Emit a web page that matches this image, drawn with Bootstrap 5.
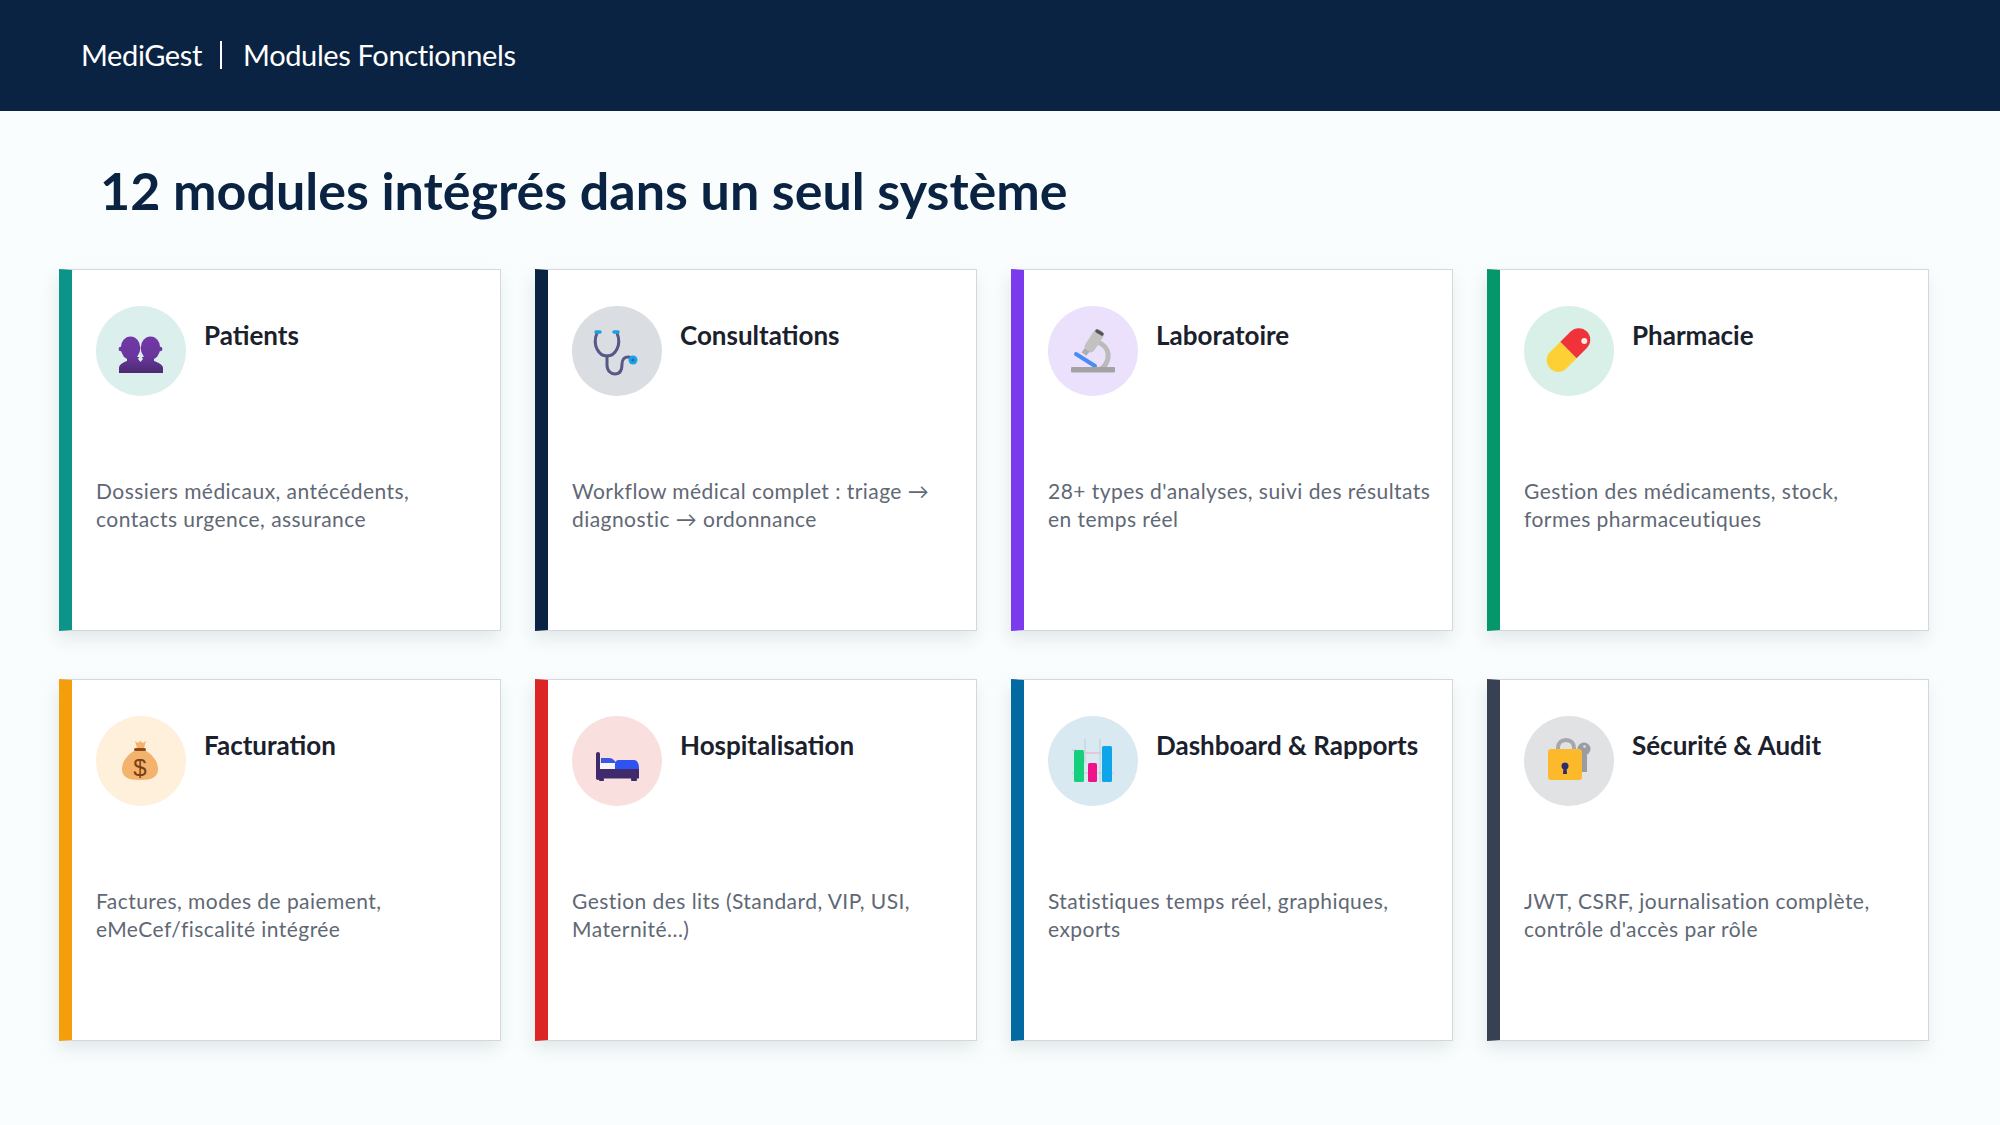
<!DOCTYPE html>
<html lang="fr">
<head>
<meta charset="utf-8">
<title>MediGest | Modules Fonctionnels</title>
<link href="https://cdn.jsdelivr.net/npm/bootstrap@5.3.0/dist/css/bootstrap.min.css" rel="stylesheet">
<style>
body{background:#f9fdfd;font-family:Lato,"Liberation Sans",sans-serif;min-height:1125px}
.app-head{height:111px;background:#0a2342;color:#fff;padding:0 0 2px 81px;font-size:29px;letter-spacing:-.37px}
.app-head .sep{width:2px;height:28px;background:#fff;margin:0 21px 0 18px}
.page-title{margin:0;padding:48px 0 0 100px;height:158px;font-size:52px;font-weight:700;color:#0a2342;line-height:62px}
.modules{padding:0 71px 0 59px}
.modules .row{--bs-gutter-x:34px;--bs-gutter-y:48px}
.module{height:362px;border-radius:0;border:1px solid #d3d8dd;border-left:13px solid var(--accent);box-shadow:-2px 8px 16px rgba(30,50,70,.1)}
.module .card-body{padding:36px 19px 0 24px}
.module-icon{width:90px;height:90px;flex:none;background:var(--tint)}
.module-icon svg{display:block}
.module .card-title{margin:9px 0 0 18px;font-size:26px;line-height:40px;font-weight:700;color:#1a202c;white-space:nowrap}
.module .card-text{margin-top:81px;font-size:21px;line-height:28px;color:#5f6875;letter-spacing:.45px}
.a-teal{--accent:#0d9488;--tint:#dbefed}
.a-navy{--accent:#0a2342;--tint:#dadee3}
.a-purple{--accent:#7c3aed;--tint:#ebe1fc}
.a-green{--accent:#059669;--tint:#d9f0e9}
.a-orange{--accent:#f59e0b;--tint:#fef0da}
.a-red{--accent:#dc2626;--tint:#fadfdf}
.a-blue{--accent:#0369a1;--tint:#d9e9f1}
.a-slate{--accent:#374151;--tint:#e1e2e4}
</style>
</head>
<body>
<header class="app-head d-flex align-items-center">
  <span>MediGest</span><span class="sep"></span><span>Modules Fonctionnels</span>
</header>
<h1 class="page-title">12 modules intégrés dans un seul système</h1>
<main class="modules">
<div class="row row-cols-4">

<div class="col"><div class="card module a-teal"><div class="card-body">
  <div class="d-flex">
    <div class="module-icon rounded-circle"><svg width="90" height="90" viewBox="0 0 90 90"><defs><linearGradient id="g1" gradientUnits="userSpaceOnUse" x1="0" y1="30" x2="0" y2="67"><stop offset="0" stop-color="#7238a8"/><stop offset=".55" stop-color="#6a369c"/><stop offset="1" stop-color="#4c2a72"/></linearGradient></defs><g fill="url(#g1)"><ellipse cx="34.500" cy="42" rx="9.800" ry="11.500"/><ellipse cx="54.500" cy="42" rx="9.800" ry="11.500"/><circle cx="24.800" cy="43" r="2.200"/><circle cx="64.200" cy="43" r="2.200"/><path d="M23 67v-5c0-3.500 4-5.500 8-7v-4h27v4c4 1.500 9 3.500 9 7v5z"/></g><path fill="#dbefed" d="M44.500 49l-2.500 4 2.500 3 2.500-3z"/></svg></div>
    <h5 class="card-title">Patients</h5>
  </div>
  <p class="card-text">Dossiers médicaux, antécédents, contacts urgence, assurance</p>
</div></div></div>

<div class="col"><div class="card module a-navy"><div class="card-body">
  <div class="d-flex">
    <div class="module-icon rounded-circle"><svg width="90" height="90" viewBox="0 0 90 90" fill="none"><g transform="translate(-1 0)"><path stroke="#575886" stroke-width="3" stroke-linecap="round" d="M26 27c-2 5-3 10 0 16 2 4 6 7 10 7s8-3 10-7c3-6 2-11 0-16"/><path stroke="#575886" stroke-width="3" stroke-linecap="round" d="M36 50v9c0 6 4 9 8 9 6 0 7-5 7-10 0-5 3-7 6-7 3 0 4 1 5 3"/><path stroke="#1d9ee2" stroke-width="3.500" stroke-linecap="round" d="M25 26h4M43 26h4"/><circle cx="62" cy="54" r="4.500" fill="#1da1e6"/><circle cx="62" cy="54" r="1.500" fill="#2f5fb5"/></g></svg></div>
    <h5 class="card-title">Consultations</h5>
  </div>
  <p class="card-text">Workflow médical complet : triage → diagnostic → ordonnance</p>
</div></div></div>

<div class="col"><div class="card module a-purple"><div class="card-body">
  <div class="d-flex">
    <div class="module-icon rounded-circle"><svg width="90" height="90" viewBox="0 0 90 90" fill="none"><g transform="translate(-2 0)"><path stroke="#bbbcba" stroke-width="5" stroke-linecap="round" d="M52 36c7 3 11 9 10 16-1 5-3 8-6 10"/><path stroke="#c2c3c1" stroke-width="11" stroke-linecap="round" d="M52 29 44 41"/><path stroke="#adaeac" stroke-width="6" d="M41 44 38 48"/><path stroke="#55555d" stroke-width="3.500" stroke-linecap="round" d="M51 25 56 28"/><path stroke="#4a8cf5" stroke-width="4" stroke-linecap="round" d="M30 48 49 60"/><rect x="25" y="61" width="44" height="5.500" rx="1" fill="#a3a3a3"/></g></svg></div>
    <h5 class="card-title">Laboratoire</h5>
  </div>
  <p class="card-text">28+ types d'analyses, suivi des résultats en temps réel</p>
</div></div></div>

<div class="col"><div class="card module a-green"><div class="card-body">
  <div class="d-flex">
    <div class="module-icon rounded-circle"><svg width="90" height="90" viewBox="0 0 90 90"><g transform="translate(-3 0)"><g transform="rotate(-45 47.500 44)"><path fill="#fdd135" d="M47.500 32.500H33a11.500 11.500 0 0 0 0 23h14.500z"/><path fill="#f0333a" d="M47.500 32.500H62a11.500 11.500 0 0 1 0 23H47.500z"/></g><circle cx="63.300" cy="35" r="3" fill="#fdeee0"/></g></svg></div>
    <h5 class="card-title">Pharmacie</h5>
  </div>
  <p class="card-text">Gestion des médicaments, stock, formes pharmaceutiques</p>
</div></div></div>

<div class="col"><div class="card module a-orange"><div class="card-body">
  <div class="d-flex">
    <div class="module-icon rounded-circle"><svg width="90" height="90" viewBox="0 0 90 90"><path fill="#f5b26b" d="M39 25l3 2 2-2 3 2 3-2-2 7 2 3h-11l2-3z"/><path fill="#f3b36c" d="M38 35h12c7 4 12 11 12 18 0 8-6 11-18 11s-18-3-18-11c0-7 5-14 12-18z"/><rect x="38" y="32" width="12" height="3" rx="1.500" fill="#8b4b1c"/><text x="44" y="60" text-anchor="middle" font-family="Liberation Sans,sans-serif" font-size="24" fill="#7a3f16">$</text></svg></div>
    <h5 class="card-title">Facturation</h5>
  </div>
  <p class="card-text">Factures, modes de paiement, eMeCef/fiscalité intégrée</p>
</div></div></div>

<div class="col"><div class="card module a-red"><div class="card-body">
  <div class="d-flex">
    <div class="module-icon rounded-circle"><svg width="90" height="90" viewBox="0 0 90 90"><g transform="translate(-1 0)"><rect x="25" y="36" width="4" height="28" rx="2" fill="#3f2a6b"/><rect x="29" y="47" width="16" height="6" fill="#f7f3f7"/><path fill="#3b55e6" d="M30 42h8c3 0 6 2 7 5H30z"/><path fill="#2f53f0" d="M44 53v-5c0-2 1-4 4-4h15c3 0 5 3 5 9z"/><rect x="25" y="53" width="43" height="9.500" fill="#3f2a6b"/><rect x="28" y="62" width="5" height="3" rx="1" fill="#3f2a6b"/><rect x="60" y="62" width="6" height="3" rx="1" fill="#3f2a6b"/></g></svg></div>
    <h5 class="card-title">Hospitalisation</h5>
  </div>
  <p class="card-text">Gestion des lits (Standard, VIP, USI, Maternité...)</p>
</div></div></div>

<div class="col"><div class="card module a-blue"><div class="card-body">
  <div class="d-flex">
    <div class="module-icon rounded-circle"><svg width="90" height="90" viewBox="0 0 90 90"><g transform="translate(-2 0)"><path stroke="#c3cbd2" stroke-width="1" fill="none" d="M39 23v24M54 23v43M26 57h42M39 37h16"/><path stroke="#f3b8d2" stroke-width="1" fill="none" d="M26 34h4M40 37h14"/><rect x="28" y="34" width="10" height="32" rx="1.500" fill="#16cf7c"/><rect x="42" y="47" width="9" height="19" rx="1.500" fill="#f0128a"/><rect x="56" y="30" width="10" height="36" rx="1.500" fill="#0ea5e9"/></g></svg></div>
    <h5 class="card-title">Dashboard &amp; Rapports</h5>
  </div>
  <p class="card-text">Statistiques temps réel, graphiques, exports</p>
</div></div></div>

<div class="col"><div class="card module a-slate"><div class="card-body">
  <div class="d-flex">
    <div class="module-icon rounded-circle"><svg width="90" height="90" viewBox="0 0 90 90" fill="none"><g transform="translate(-3 0)"><path stroke="#a5a7ac" stroke-width="4" d="M37 35v-3c0-5 3-8 8-8s8 3 8 8v3"/><circle cx="63" cy="33" r="6.500" fill="#999ca2"/><rect x="61" y="35" width="5" height="21" fill="#999ca2"/><circle cx="63.500" cy="30.500" r="1.300" fill="#e1e2e4"/><rect x="27" y="33" width="34" height="31" rx="3" fill="#fcb92c"/><circle cx="44" cy="50" r="3.500" fill="#2d2d6e"/><path fill="#2d2d6e" d="M42.500 51h3l.5 7h-4z"/></g></svg></div>
    <h5 class="card-title">Sécurité &amp; Audit</h5>
  </div>
  <p class="card-text">JWT, CSRF, journalisation complète, contrôle d'accès par rôle</p>
</div></div></div>

</div>
</main>
<script src="https://cdn.jsdelivr.net/npm/bootstrap@5.3.0/dist/js/bootstrap.bundle.min.js"></script>
</body>
</html>
